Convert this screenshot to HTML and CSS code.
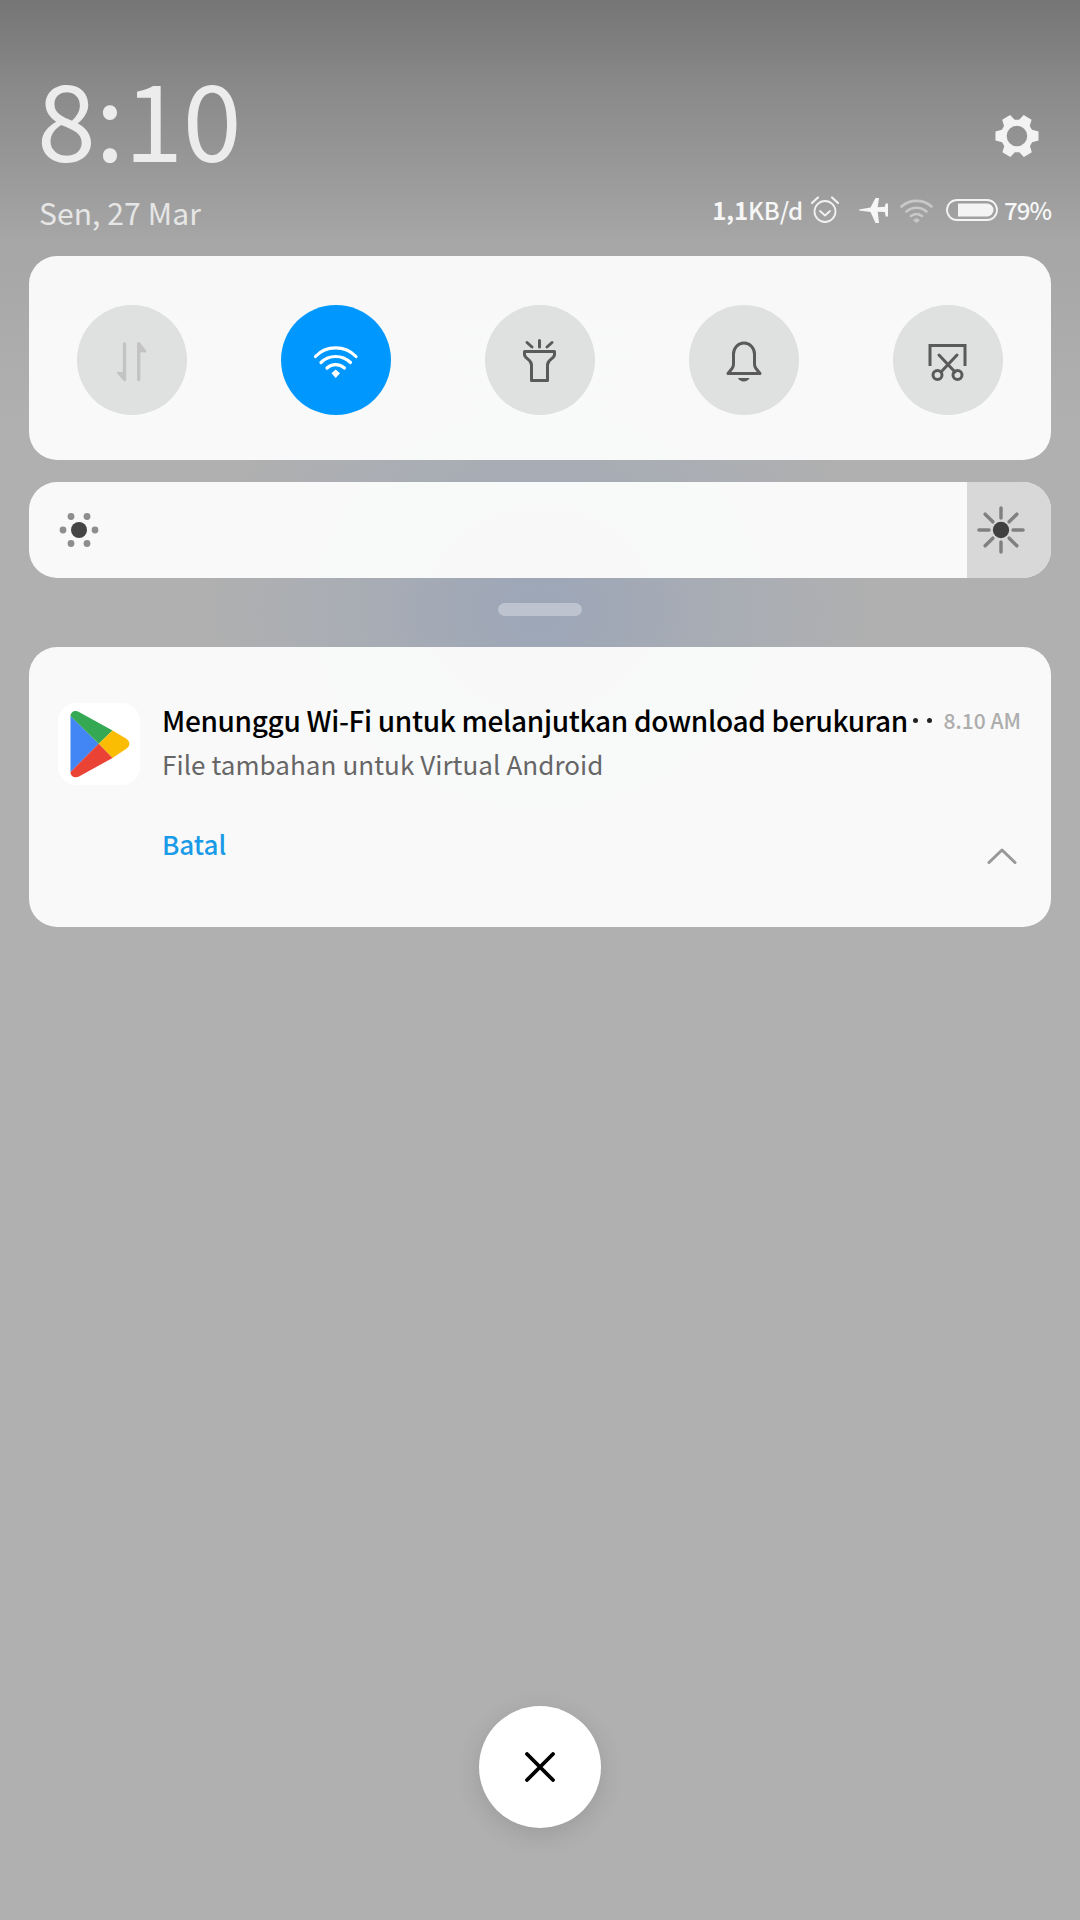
FILE: index.html
```html
<!DOCTYPE html>
<html lang="id">
<head>
<meta charset="utf-8">
<title>Notification shade</title>
<link rel="stylesheet" href="styles.css">
</head>
<body>
<div class="screen">
  <header class="header">
    <div class="top-row">
      <div class="clock">8:10</div>
      <svg class="gear" viewBox="0 0 42 42" aria-label="Setelan">
        <path fill="#f3f3f3" fill-rule="evenodd" d="M17 0h8l1.400 5.600 3.400 1.900 5.500-1.600 4 6.900-4.100 4 0 3.900 4.100 4-4 6.900-5.500-1.600-3.400 1.900L25 37.700h-8l-1.400-5.600-3.400-1.900-5.500 1.600-4-6.900 4.100-4 0-3.900-4.100-4 4-6.900 5.500 1.600 3.400-1.900L17 0zM21 9.900a9 9 0 1 0 0 18 9 9 0 0 0 0-18z" transform="rotate(90 21 21) translate(0 2.150)"/>
      </svg>
    </div>
    <div class="info-row">
      <div class="date">Sen, 27 Mar</div>
      <div class="status">
        <span class="speed"><b>1,1</b>KB/d</span>
        <svg class="st-alarm" viewBox="0 0 30 30">
          <circle cx="15" cy="16.500" r="10.500" fill="none" stroke="#f2f2f2" stroke-width="1.800"/>
          <path d="M10 16l5 4.500 5-4.500" fill="none" stroke="#f2f2f2" stroke-width="1.800" stroke-linecap="round" stroke-linejoin="round"/>
          <path d="M2 8L8 2.500M28 8L22 2.500" fill="none" stroke="#f2f2f2" stroke-width="2.200" stroke-linecap="round"/>
        </svg>
        <svg class="st-plane" viewBox="0 0 29 25">
          <path fill="#f6f6f6" d="M0 11.500L11.500 9.500 16.500 0H20L18.700 9.300 25.800 8.800 26.700 5.500H29V18.500H26.700L25.800 14 18.700 13.700 20 25H16.500L11.500 14 0 12.500Z"/>
        </svg>
        <svg class="st-wifi" viewBox="0 0 33 25">
          <path d="M1.500 8.500C10 1 23 1 31.500 8.500M6.500 13.500C12.500 8.500 20.500 8.500 26.500 13.500M11 18C14.500 15.500 18.500 15.500 22 18" fill="none" stroke="#c8c8c8" stroke-width="2.600" stroke-linecap="round"/>
          <path d="M16.500 20l3.500 2.200-3.500 2.800-3.500-2.800z" fill="#c8c8c8"/>
        </svg>
        <svg class="st-battery" viewBox="0 0 52 22">
          <rect x="1" y="1" width="50" height="20" rx="10" fill="none" stroke="#f4f4f4" stroke-width="1.800"/>
          <path d="M12 4.500H41a6.500 6.500 0 0 1 0 13H12z" fill="#f4f4f4"/>
        </svg>
        <span class="percent">79%</span>
      </div>
    </div>
  </header>

  <main class="panels">
    <section class="card tiles">
      <button class="tile">
        <svg class="tile-icon" viewBox="0 0 48 48">
          <path d="M16.500 8V43.500M30.700 8V43.500" stroke="#c3c3c3" stroke-width="3.400" stroke-linecap="round" fill="none"/>
          <path d="M18.200 44.500H15.500L9 37.300V35.800L15 36Z M29 6.500H31.700L38.200 14.500V16.500L32.400 16.200Z" fill="#c3c3c3"/>
        </svg>
      </button>
      <button class="tile tile-on">
        <svg class="tile-icon" viewBox="0 0 48 48">
          <path d="M3.500 20.500C14 9 33 9 44 20.500M9 26.500C17 18.500 30 18.500 38.500 26.500M15 32C19.500 27.500 27.500 27.500 32.500 32" fill="none" stroke="#fff" stroke-width="3.200" stroke-linecap="round"/>
          <path d="M23.700 33.500L28 37.300 23.700 42 19.500 37.300Z" fill="#fff"/>
        </svg>
      </button>
      <button class="tile">
        <svg class="tile-icon" viewBox="0 0 48 48">
          <path d="M23.500 4.500V11M11 6.500L16 11M36 6.500L31 11" fill="none" stroke="#5a5a5a" stroke-width="3" stroke-linecap="round"/>
          <path d="M8.500 15.500H38.500V18.500C38.500 23 31.500 23 31.500 29V44.500H15.500V29C15.500 23 8.500 23 8.500 18.500Z" fill="none" stroke="#5a5a5a" stroke-width="3" stroke-linejoin="round"/>
        </svg>
      </button>
      <button class="tile">
        <svg class="tile-icon" viewBox="0 0 48 48">
          <path d="M8 37.500L12 32.500Q13.500 30.500 13.500 28V18A10.500 11 0 0 1 34.500 18V28Q34.500 30.500 36 32.500L40 37.500Z" fill="none" stroke="#5a5a5a" stroke-width="3" stroke-linejoin="round"/>
          <path d="M18 42H29.500C28 46.500 19.500 46.500 18 42Z" fill="#5a5a5a"/>
        </svg>
      </button>
      <button class="tile">
        <svg class="tile-icon" viewBox="0 0 48 48">
          <path d="M6 30V9.500H41V30" fill="none" stroke="#5a5a5a" stroke-width="3"/>
          <path d="M15 19L31 36M33 19L17 36" fill="none" stroke="#5a5a5a" stroke-width="3" stroke-linecap="round"/>
          <circle cx="13.500" cy="39" r="4.500" fill="none" stroke="#5a5a5a" stroke-width="3"/>
          <circle cx="33.500" cy="39" r="4.500" fill="none" stroke="#5a5a5a" stroke-width="3"/>
        </svg>
      </button>
    </section>

    <section class="card brightness">
      <svg class="dim-icon" viewBox="0 0 40 40">
        <circle cx="20" cy="20" r="8" fill="#454545"/>
        <g fill="#8e8e8e">
          <circle cx="4" cy="20" r="3.400"/><circle cx="36" cy="20" r="3.400"/>
          <circle cx="12" cy="6.500" r="3.400"/><circle cx="28" cy="6.500" r="3.400"/>
          <circle cx="12" cy="33.500" r="3.400"/><circle cx="28" cy="33.500" r="3.400"/>
        </g>
      </svg>
      <div class="bright-thumb">
        <svg class="bright-icon" viewBox="0 0 50 50">
          <path d="M25 2V12.500M25 37.500V48M2 25H12.500M37.500 25H48M8.500 8.500L16.500 16.500M33.500 33.500L41.500 41.500M8.500 41.500L16.500 33.500M33.500 16.500L41.500 8.500" fill="none" stroke="#808080" stroke-width="3.600" stroke-linecap="round"/>
          <circle cx="25" cy="25" r="8.500" fill="#404040"/>
        </svg>
      </div>
    </section>

    <div class="handle"></div>

    <section class="card notification">
      <div class="app-icon">
        <svg viewBox="0 0 82 82" class="play">
          <path fill="#4285f4" d="M12.500 13L40.700 40.700 12.500 69Z"/>
          <path fill="#34a853" d="M12.500 13C12.500 9 17 6.500 21 9L54.500 27.500 40.700 40.700Z"/>
          <path fill="#fbbc04" d="M54.500 27.500L68 35.500C72.500 38.500 72.500 43 68 46L54.500 55 40.700 40.700Z"/>
          <path fill="#ea4335" d="M40.700 40.700L54.500 55 21 73.500C17 75.500 12.500 73.500 12.500 69Z"/>
        </svg>
      </div>
      <div class="body">
        <div class="title-row">
          <span class="title">Menunggu Wi-Fi untuk melanjutkan download berukuran</span>
          <span class="dots"><i></i><i></i></span>
          <span class="when">8.10 AM</span>
        </div>
        <div class="subtitle">File tambahan untuk Virtual Android</div>
        <div class="action-row">
          <span class="action">Batal</span>
          <svg class="chevron" viewBox="0 0 30 16">
            <path d="M2 14.500L15 2 28 14.500" fill="none" stroke="#989898" stroke-width="3" stroke-linecap="round" stroke-linejoin="round"/>
          </svg>
        </div>
      </div>
    </section>
  </main>

  <footer class="footer">
    <button class="close">
      <svg viewBox="0 0 30 30" class="close-icon">
        <path d="M2 2L28 28M28 2L2 28" stroke="#000" stroke-width="3.800" stroke-linecap="round"/>
      </svg>
    </button>
  </footer>
</div>
</body>
</html>
```

FILE: styles.css
```css
* { box-sizing: border-box; }
html, body { margin: 0; padding: 0; }
body { width: 1080px; height: 1920px; overflow: hidden; }

.screen {
  width: 1080px;
  height: 1920px;
  display: flex;
  flex-direction: column;
  font-family: "Noto Sans CJK SC", "Noto Sans", sans-serif;
  background:
    radial-gradient(ellipse 340px 300px at 540px 610px, rgba(140, 158, 190, .55), rgba(150, 165, 190, .28) 55%, rgba(176, 176, 176, 0) 100%),
    linear-gradient(180deg, #757575 0, #8a8a8a 90px, #a6a6a6 240px, #b0b0b0 420px, #b0b0b0 100%);
}

.header { height: 256px; padding: 61px 29px 0 39px; display: flex; flex-direction: column; }
.top-row { display: flex; justify-content: space-between; align-items: flex-start; height: 110px; }
.clock { font-size: 106px; line-height: 110px; font-weight: 400; color: #ececec; margin-left: -2px; letter-spacing: -.5px; }
.gear { width: 48px; height: 48px; margin: 51px 10px 0 0; }

.info-row { display: flex; justify-content: space-between; align-items: flex-start; padding-top: 19px; }
.date { font-size: 30px; line-height: 44px; color: #e6e6e6; letter-spacing: .1px; }
.status { display: flex; align-items: center; height: 40px; margin-top: 0; color: #f6f6f6; font-size: 24px; line-height: 40px; }
.speed { font-weight: 500; margin-right: 7px; letter-spacing: -.15px; }
.speed b { font-weight: 700; }
.st-alarm { width: 30px; height: 30px; margin-right: 19px; }
.st-plane { width: 29px; height: 25px; margin-right: 12px; }
.st-wifi { width: 33px; height: 25px; margin-right: 13px; }
.st-battery { width: 52px; height: 22px; margin-right: 6px; }
.percent { font-weight: 500; letter-spacing: -1px; }

.panels { padding: 0 29px; display: flex; flex-direction: column; }
.card { background: rgba(251, 251, 251, .97); border-radius: 28px; }

.tiles { height: 204px; display: flex; justify-content: space-between; align-items: center; padding: 4px 48px 0; }
.tile { width: 110px; height: 110px; border: 0; padding: 0; border-radius: 50%; background: #dfe0e0; display: flex; align-items: center; justify-content: center; }
.tile-on { background: #0098ff; }
.tile-icon { width: 48px; height: 48px; }

.brightness { height: 96px; margin-top: 22px; display: flex; justify-content: space-between; align-items: center; padding-left: 30px; overflow: hidden; }
.dim-icon { width: 40px; height: 40px; }
.bright-thumb { width: 84px; height: 100%; background: #d8d8d8; display: flex; align-items: center; padding-left: 10px; }
.bright-icon { width: 48px; height: 48px; }

.handle { width: 84px; height: 13px; border-radius: 7px; background: #bdc3cf; margin: 25px auto 31px; }

.notification { height: 280px; display: flex; align-items: flex-start; padding: 56px 30px 0 29px; gap: 22px; }
.app-icon { width: 82px; height: 82px; flex: none; border-radius: 18px; background: #fff; }
.play { width: 82px; height: 82px; display: block; }
.body { flex: 1; min-width: 0; }
.title-row { display: flex; align-items: center; height: 40px; margin-top: -3px; }
.title { font-size: 28px; line-height: 40px; font-weight: 500; color: #000; white-space: nowrap; flex: none; letter-spacing: -.33px; }
.dots { display: flex; gap: 9px; margin-left: 5px; flex: none; }
.dots i { width: 5px; height: 5px; border-radius: 50%; background: #222; }
.when { margin-left: auto; font-size: 21px; font-weight: 500; color: #adadad; white-space: nowrap; }
.subtitle { font-size: 26px; line-height: 40px; color: #666; margin-top: 4px; letter-spacing: .07px; }
.action-row { display: flex; justify-content: space-between; margin-top: 40px; }
.action { font-size: 26px; line-height: 40px; font-weight: 500; color: #1a9be8; }
.chevron { width: 30px; height: 16px; margin: 24px 4px 0 0; }

.footer { margin-top: auto; padding-bottom: 92px; display: flex; justify-content: center; }
.close { width: 122px; height: 122px; border: 0; padding: 0; border-radius: 50%; background: #fff; box-shadow: 0 6px 24px rgba(0, 0, 0, .12); display: flex; align-items: center; justify-content: center; }
.close-icon { width: 30px; height: 30px; }
```
